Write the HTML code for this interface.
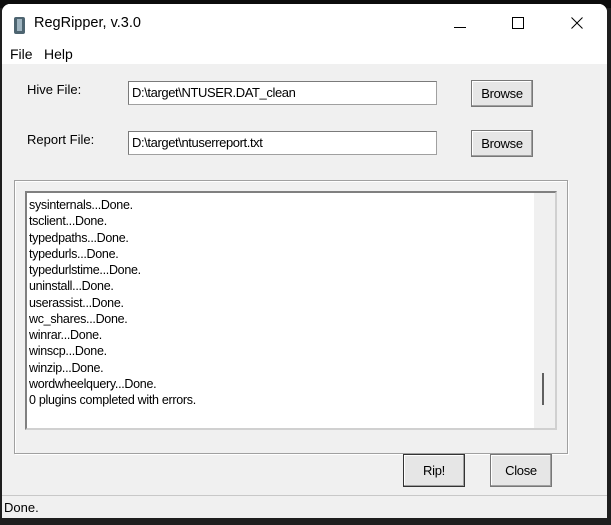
<!DOCTYPE html><html><head><style>
body{margin:0;width:611px;height:525px;background:#1e1e1e;position:relative;overflow:hidden;font-family:"Liberation Sans",sans-serif;font-size:12px;color:#000}
.a{position:absolute}
.win{left:2px;top:4px;width:605px;height:514px;background:#f0f0f0;border-radius:8px 8px 0 0;overflow:hidden}
.inp{background:#fff;border:1px solid #a0a0a0;border-top-color:#7a7a7a;border-left-color:#7a7a7a;box-sizing:border-box;padding:3px 3px;font-size:13px;letter-spacing:-0.4px}
.btn{background:#e6e6e6;border:1px solid #777;box-shadow:inset -1px -1px #a0a0a0,inset 1px 1px #fff;box-sizing:border-box;text-align:center;font-size:13px;letter-spacing:-0.3px}
.ln{font-size:12.5px;line-height:16.25px;letter-spacing:-0.3px}
</style></head><body>
<div class="a" style="left:0;top:0;width:611px;height:8px;background:#0c0c0c"></div>
<div class="a win">
 <div class="a" style="left:0;top:0;width:605px;height:60px;background:#fff"></div>
 <svg class="a" style="left:10px;top:12px" width="16" height="20"><rect x="2" y="1" width="11" height="17" rx="2" fill="#4d6470"/><rect x="5" y="3" width="5" height="12" fill="#9fb4c0"/></svg>
 <div class="a" style="left:32px;top:11px;font-size:14.5px">RegRipper, v.3.0</div>
 <div class="a" style="left:452px;top:23px;width:12px;height:1px;background:#000"></div>
 <div class="a" style="left:510px;top:13px;width:10px;height:10px;border:1px solid #000"></div>
 <svg class="a" style="left:569px;top:13px" width="12" height="12"><path d="M0.5 0.5L11.5 11.5M11.5 0.5L0.5 11.5" stroke="#000"/></svg>
 <div class="a" style="left:8px;top:42px;font-size:14px">File</div>
 <div class="a" style="left:42px;top:42px;font-size:14px">Help</div>
 <div class="a" style="left:25px;top:78px;font-size:13px">Hive File:</div>
 <div class="a" style="left:25px;top:128px;font-size:13px">Report File:</div>
 <div class="a inp" style="left:126px;top:77px;width:309px;height:24px">D:\target\NTUSER.DAT_clean</div>
 <div class="a inp" style="left:126px;top:127px;width:309px;height:24px">D:\target\ntuserreport.txt</div>
 <div class="a btn" style="left:469px;top:76px;width:62px;height:27px;line-height:25px">Browse</div>
 <div class="a btn" style="left:469px;top:126px;width:62px;height:27px;line-height:25px">Browse</div>
 <div class="a" style="left:12px;top:176px;width:552px;height:272px;border:1px solid #a0a0a0;box-shadow:1px 1px #fff inset,1px 1px #fff"></div>
 <div class="a" style="left:23px;top:187px;width:532px;height:239px;background:#fff;border:2px solid #808080;border-right-color:#d0d0d0;border-bottom-color:#d0d0d0;box-sizing:border-box">
  <div class="a" style="left:507px;top:0;width:21px;height:235px;background:#f0f0f0"></div>
  <div class="a" style="left:515px;top:180px;width:2px;height:32px;background:#606060"></div>
  <div class="a ln" style="left:2px;top:4px">sysinternals...Done.<br>tsclient...Done.<br>typedpaths...Done.<br>typedurls...Done.<br>typedurlstime...Done.<br>uninstall...Done.<br>userassist...Done.<br>wc_shares...Done.<br>winrar...Done.<br>winscp...Done.<br>winzip...Done.<br>wordwheelquery...Done.<br>0 plugins completed with errors.</div>
 </div>
 <div class="a btn" style="left:401px;top:450px;width:62px;height:33px;line-height:31px;border-color:#333">Rip!</div>
 <div class="a btn" style="left:488px;top:450px;width:62px;height:33px;line-height:31px">Close</div>
 <div class="a" style="left:0;top:491px;width:605px;height:1px;background:#c8c8c8"></div>
 <div class="a" style="left:2px;top:496px;font-size:13px">Done.</div>
</div>
</body></html>
